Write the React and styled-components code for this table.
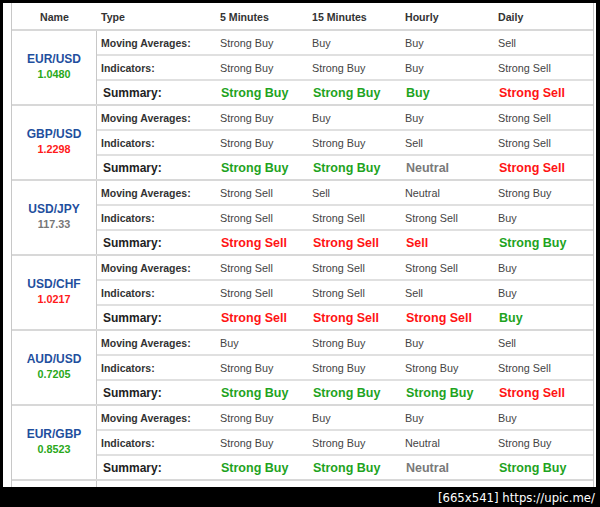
import React from 'react';
import styled, { createGlobalStyle } from 'styled-components';

const GlobalStyle = createGlobalStyle`
  html, body {
    margin: 0;
    padding: 0;
    background: #000;
    font-family: "Liberation Sans", Arial, sans-serif;
  }
`;

const COLS = '119px 92px 93px 93px 99px';

const Page = styled.div`
  width: 600px;
  height: 507px;
  background: #000;
  padding-top: 3px;
  box-sizing: border-box;
  display: flex;
  flex-direction: column;
`;

const Sheet = styled.div`
  margin-left: 3px;
  width: 593px;
  height: 484px;
  background: #fff;
  padding-left: 8px;
  box-sizing: border-box;
  overflow: hidden;
`;

const Table = styled.div`
  width: 583px;
  border-left: 1px solid #c8c8c8;
  border-right: 1px solid #c8c8c8;
  box-sizing: border-box;
`;

const HeaderRow = styled.div`
  display: flex;
  height: 28px;
  box-sizing: border-box;
  padding-top: 1px;
  border-bottom: 2px solid #d8d8d8;
  font-size: 10.6px;
  font-weight: bold;
  color: #333;
`;

const HeadName = styled.div`
  width: 85px;
  flex: none;
  display: flex;
  align-items: center;
  justify-content: center;
`;

const HeadCols = styled.div`
  display: grid;
  grid-template-columns: ${COLS};
  align-items: center;
  > span {
    padding-left: 4px;
  }
`;

const Group = styled.div`
  display: flex;
  height: 75px;
  box-sizing: border-box;
  border-bottom: 2px solid #d8d8d8;
`;

const NameCell = styled.div`
  width: 85px;
  flex: none;
  box-sizing: border-box;
  border-right: 1px solid #c8c8c8;
  display: flex;
  flex-direction: column;
  align-items: center;
  justify-content: center;
  font-weight: bold;
  padding-bottom: 2px;
`;

const Pair = styled.span`
  color: #1f4f9e;
  font-size: 12px;
  line-height: 15px;
`;

const Price = styled.span`
  color: ${p => p.$tone};
  font-size: 10.8px;
  line-height: 15px;
`;

const Rows = styled.div`
  display: flex;
  flex-direction: column;
  flex: 1;
`;

const Row = styled.div`
  display: grid;
  grid-template-columns: ${COLS};
  align-items: center;
  flex: 1;
  box-sizing: border-box;
  padding-top: 1px;
  border-bottom: ${p => (p.$last ? 'none' : '2px solid #e0e0e0')};
`;

const Label = styled.span`
  font-weight: bold;
  font-size: ${p => (p.$summary ? '12px' : '10.5px')};
  color: ${p => (p.$summary ? '#222' : '#333')};
  padding-left: ${p => (p.$summary ? '6px' : '4px')};
`;

const Value = styled.span`
  padding-left: 4px;
  font-size: 10.8px;
  color: #444;
`;

const SummaryValue = styled.span`
  padding-left: 5px;
  font-size: 12.5px;
  font-weight: bold;
  color: ${p => p.$tone};
`;

const Footer = styled.div`
  flex: 1;
  display: flex;
  align-items: center;
  justify-content: flex-end;
  padding-right: 5px;
  color: #fff;
  font-family: "DejaVu Sans Condensed", "Liberation Sans Narrow", sans-serif;
  font-size: 13px;
  white-space: nowrap;
`;

const GREEN = '#1ea31e';
const RED = '#ff1414';
const GRAY = '#7a7a7a';

const toneOf = v => {
  if (v.includes('Buy')) return GREEN;
  if (v.includes('Sell')) return RED;
  return GRAY;
};

const data = [
  {
    pair: 'EUR/USD', price: '1.0480', tone: '#2aa81a',
    ma: ['Strong Buy', 'Buy', 'Buy', 'Sell'],
    ind: ['Strong Buy', 'Strong Buy', 'Buy', 'Strong Sell'],
    sum: ['Strong Buy', 'Strong Buy', 'Buy', 'Strong Sell'],
  },
  {
    pair: 'GBP/USD', price: '1.2298', tone: '#ff1a1a',
    ma: ['Strong Buy', 'Buy', 'Buy', 'Strong Sell'],
    ind: ['Strong Buy', 'Strong Buy', 'Sell', 'Strong Sell'],
    sum: ['Strong Buy', 'Strong Buy', 'Neutral', 'Strong Sell'],
  },
  {
    pair: 'USD/JPY', price: '117.33', tone: '#777',
    ma: ['Strong Sell', 'Sell', 'Neutral', 'Strong Buy'],
    ind: ['Strong Sell', 'Strong Sell', 'Strong Sell', 'Buy'],
    sum: ['Strong Sell', 'Strong Sell', 'Sell', 'Strong Buy'],
  },
  {
    pair: 'USD/CHF', price: '1.0217', tone: '#ff1a1a',
    ma: ['Strong Sell', 'Strong Sell', 'Strong Sell', 'Buy'],
    ind: ['Strong Sell', 'Strong Sell', 'Sell', 'Buy'],
    sum: ['Strong Sell', 'Strong Sell', 'Strong Sell', 'Buy'],
  },
  {
    pair: 'AUD/USD', price: '0.7205', tone: '#2aa81a',
    ma: ['Buy', 'Strong Buy', 'Buy', 'Sell'],
    ind: ['Strong Buy', 'Strong Buy', 'Strong Buy', 'Strong Sell'],
    sum: ['Strong Buy', 'Strong Buy', 'Strong Buy', 'Strong Sell'],
  },
  {
    pair: 'EUR/GBP', price: '0.8523', tone: '#2aa81a',
    ma: ['Strong Buy', 'Buy', 'Buy', 'Buy'],
    ind: ['Strong Buy', 'Strong Buy', 'Neutral', 'Strong Buy'],
    sum: ['Strong Buy', 'Strong Buy', 'Neutral', 'Strong Buy'],
  },
];

export default function App() {
  return (
    <Page>
      <GlobalStyle />
      <Sheet>
        <Table>
          <HeaderRow>
            <HeadName>Name</HeadName>
            <HeadCols>
              <span>Type</span>
              <span>5 Minutes</span>
              <span>15 Minutes</span>
              <span>Hourly</span>
              <span>Daily</span>
            </HeadCols>
          </HeaderRow>
          {data.map(g => (
            <Group key={g.pair}>
              <NameCell>
                <Pair>{g.pair}</Pair>
                <Price $tone={g.tone}>{g.price}</Price>
              </NameCell>
              <Rows>
                <Row>
                  <Label>Moving Averages:</Label>
                  {g.ma.map((v, i) => <Value key={i}>{v}</Value>)}
                </Row>
                <Row>
                  <Label>Indicators:</Label>
                  {g.ind.map((v, i) => <Value key={i}>{v}</Value>)}
                </Row>
                <Row $last>
                  <Label $summary>Summary:</Label>
                  {g.sum.map((v, i) => (
                    <SummaryValue key={i} $tone={toneOf(v)}>{v}</SummaryValue>
                  ))}
                </Row>
              </Rows>
            </Group>
          ))}
          {/* the next pair begins below the fold; only its cell borders show */}
          <Group>
            <NameCell />
            <Rows />
          </Group>
        </Table>
      </Sheet>
      <Footer>[665x541] https://upic.me/</Footer>
    </Page>
  );
}
